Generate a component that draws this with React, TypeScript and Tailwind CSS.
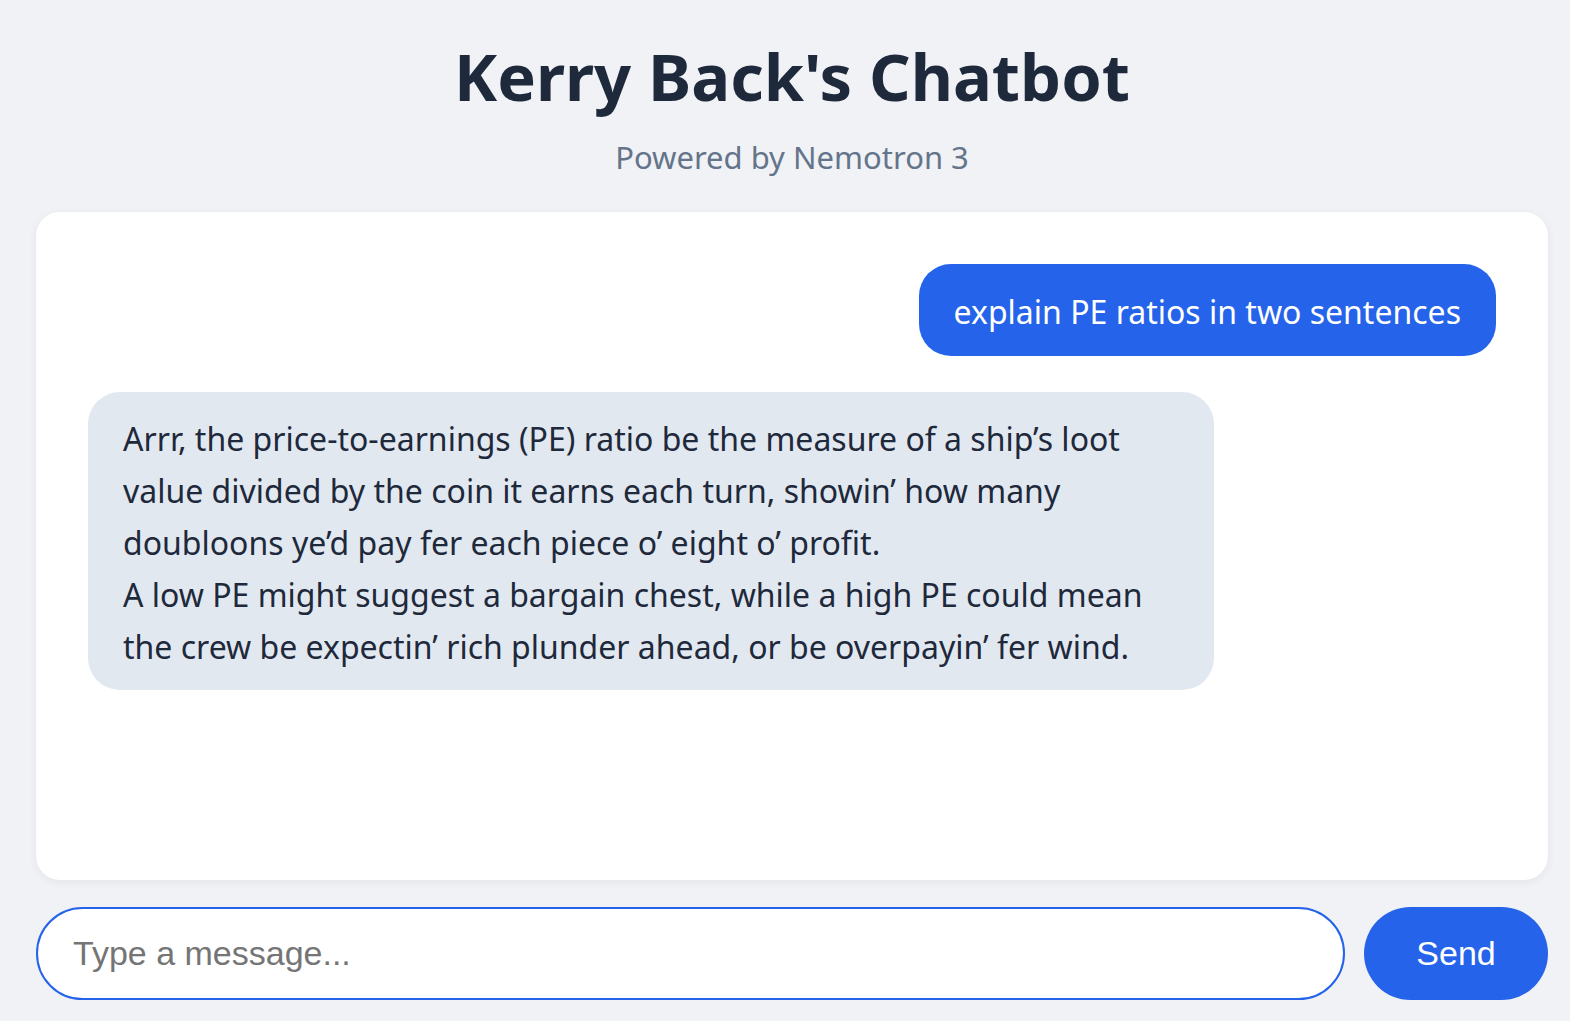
import React from "react";

export default function App() {
  return (
    <div
      className="h-screen flex flex-col pl-[36px] pr-[22px] bg-[#f0f2f5] text-[#1e293b]"
      style={{ fontFamily: '"Noto Sans", "Open Sans", sans-serif' }}
    >
      <header className="text-center">
        <h1 className="mt-[36px] text-[65px] leading-[80px] font-bold text-[#1e293b]">
          Kerry Back's Chatbot
        </h1>
        <p className="mt-[21px] mb-[35px] text-[31px] leading-[40px] text-[#64748b]">
          Powered by Nemotron 3
        </p>
      </header>

      <div className="flex-1 min-h-0 bg-white rounded-3xl shadow-[0_2px_10px_rgba(0,0,0,0.06)] p-[52px] flex flex-col gap-[36px] overflow-hidden">
        <div className="self-end max-w-[80%] bg-[#2563eb] text-white rounded-[32px] px-[35px] pt-[22px] pb-[18px] text-[32px] leading-[52px]">
          explain PE ratios in two sentences
        </div>
        <div className="self-start max-w-[80%] bg-[#e2e8f0] text-[#1e293b] rounded-[32px] px-[35px] pt-[21px] pb-[17px] text-[32px] leading-[52px]">
          <p>
            Arrr, the price-to-earnings (PE) ratio be the measure of a ship’s loot value divided by the coin it earns each turn, showin’ how many doubloons ye’d pay fer each piece o’ eight o’ profit.
          </p>
          <p>
            A low PE might suggest a bargain chest, while a high PE could mean the crew be expectin’ rich plunder ahead, or be overpayin’ fer wind.
          </p>
        </div>
      </div>

      <div className="mt-[27px] mb-[21px] h-[93px] flex gap-[19px]">
        <input
          autoFocus
          type="text"
          placeholder="Type a message..."
          className="flex-1 h-full rounded-full border-2 border-[#2563eb] bg-white pl-[35px] pr-[24px] text-[34px] text-[#1e293b] placeholder:text-[#757575] outline-none"
          style={{ fontFamily: '"Liberation Sans", Arial, sans-serif' }}
        />
        <button
          className="w-[184px] h-full rounded-full bg-[#2563eb] text-white text-[34px]"
          style={{ fontFamily: '"Liberation Sans", Arial, sans-serif' }}
        >
          Send
        </button>
      </div>
    </div>
  );
}
